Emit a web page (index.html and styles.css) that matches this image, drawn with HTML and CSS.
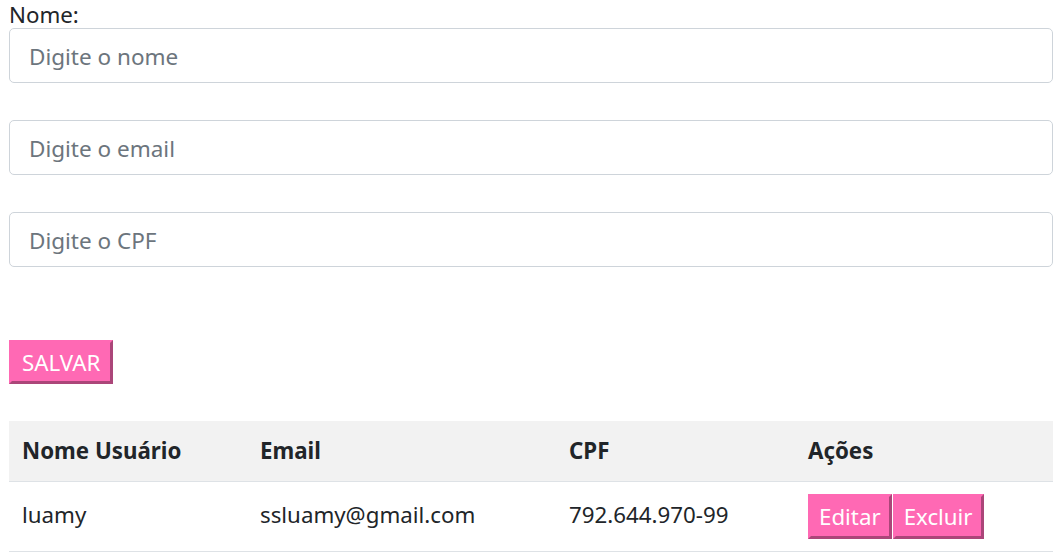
FILE: index.html
```html
<!DOCTYPE html>
<html lang="pt-BR">
<head>
<meta charset="utf-8">
<title>Usuários</title>
<link rel="stylesheet" href="styles.css">
</head>
<body>
<div class="page">
  <form class="form">
    <label class="label" for="nome">Nome:</label>
    <input class="field" id="nome" type="text" placeholder="Digite o nome">
    <input class="field" type="text" placeholder="Digite o email">
    <input class="field" type="text" placeholder="Digite o CPF">
    <div class="actions">
      <button type="button" class="btn">SALVAR</button>
    </div>
  </form>
  <table class="table">
    <thead>
      <tr>
        <th class="c1">Nome Usuário</th>
        <th class="c2">Email</th>
        <th class="c3">CPF</th>
        <th class="c4">Ações</th>
      </tr>
    </thead>
    <tbody>
      <tr>
        <td>luamy</td>
        <td>ssluamy@gmail.com</td>
        <td>792.644.970-99</td>
        <td><div class="row-btns"><button type="button" class="btn btn-sm">Editar</button><button type="button" class="btn btn-sm">Excluir</button></div></td>
      </tr>
    </tbody>
  </table>
</div>
</body>
</html>
```
FILE: styles.css
```css
* { box-sizing: border-box; }
html, body { margin: 0; padding: 0; background: #fff; }
body {
  font-family: "Noto Sans", "Open Sans", sans-serif;
  color: #212529;
  font-size: 22.3px;
}
.page {
  padding-left: 9px;
  width: 1053px;
}
.form {
  display: flex;
  flex-direction: column;
  margin: 0;
}
.label {
  display: block;
  line-height: 29px;
  height: 28px;
  margin-bottom: 0;
  font-size: 22.3px;
}
.field {
  display: block;
  width: 1044px;
  height: 55px;
  border: 1px solid #ced4da;
  border-radius: 5px;
  padding: 2px 19px 0;
  font-family: inherit;
  font-size: 22.5px;
  color: #495057;
  margin-bottom: 37px;
  outline: none;
}
.field::placeholder { color: #6c757d; }
.actions { margin-top: 36px; display: flex; }
.btn {
  background: #ff69b4;
  color: #fff;
  border: 3px outset #ff69b4;
  font-family: inherit;
  font-size: 22.3px;
  height: 44px;
  padding: 2px 10px 0;
  line-height: 1;
  cursor: pointer;
}
.btn-sm { padding: 2px 8px 0; height: 45px; }
.table {
  margin-top: 37px;
  border-collapse: collapse;
  width: 1044px;
}
.table th, .table td {
  text-align: left;
  padding: 0 13px;
  vertical-align: middle;
}
.table thead tr { background: #f2f2f2; height: 60px; }
.table th { font-weight: bold; border-bottom: 1px solid #dee2e6; }
.table td { height: 70px; border-bottom: 1px solid #dee2e6; padding-bottom: 4px; }
.table td:last-child { padding-bottom: 0; }
.c1 { width: 238px; }
.c2 { width: 309px; }
.c3 { width: 239px; }
.c4 { width: 258px; }
.row-btns { display: flex; gap: 1px; }
```
